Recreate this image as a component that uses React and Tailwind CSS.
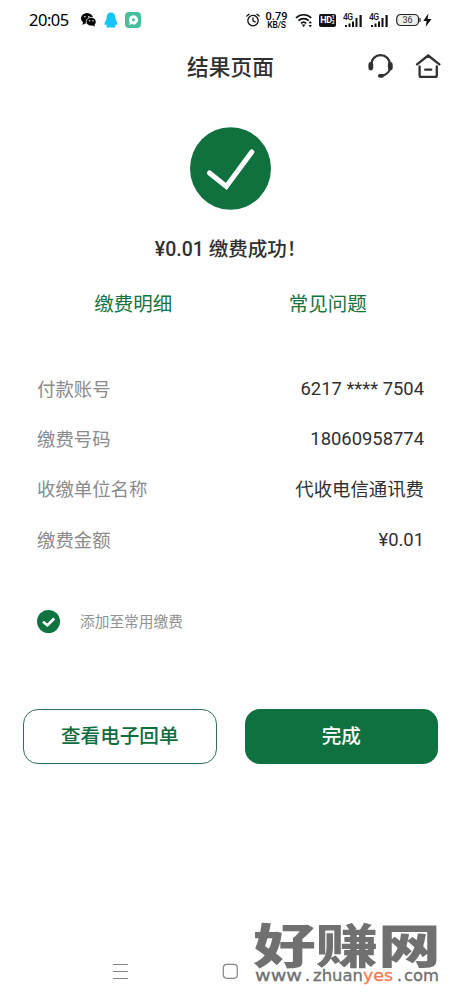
const DETAILS = [
  { label: '付款账号', value: '6217 **** 7504' },
  { label: '缴费号码', value: '18060958774' },
  { label: '收缴单位名称', value: '代收电信通讯费' },
  { label: '缴费金额', value: '¥0.01' },
]

export default function App() {
  return (
    <div className="w-full h-[1000px] flex flex-col overflow-hidden bg-[#fefefe] text-[#303030] font-['Roboto','Noto_Sans_CJK_SC',sans-serif]">
      <StatusBar />
      <Header />

      <main className="flex flex-col">
        <section className="flex flex-col items-center pt-[36px]">
          <SuccessMark />
          <h2 className="mt-[25px] h-[30px] leading-[30px] text-[19.5px] font-medium whitespace-nowrap">¥0.01 缴费成功！</h2>
        </section>

        <nav className="mt-[25px] h-[30px] px-[36px] grid grid-cols-2 items-center text-center text-[19.5px] leading-[30px] text-[#187341]">
          <button>缴费明细</button>
          <button>常见问题</button>
        </nav>

        <dl className="mt-[44px] px-[37px] flex flex-col">
          {DETAILS.map(item => (
            <DetailRow key={item.label} label={item.label} value={item.value} />
          ))}
        </dl>

        <label className="mt-[44px] h-[24px] px-[37px] flex items-center gap-[20px]">
          <svg className="w-[23px] h-[23px]" viewBox="0 0 23 23" fill="none">
            <circle cx="11.5" cy="11.5" r="11.5" fill="#0f723f" />
            <path d="M6 11.7 10.4 15.3 17.2 8.5" stroke="#fff" strokeWidth="2.7" />
          </svg>
          <span className="pt-[2px] text-[14.7px] leading-[24px] text-[#929292]">添加至常用缴费</span>
        </label>

        <div className="mt-[76px] px-[23px] grid grid-cols-2 gap-[28px] h-[55px] text-[19.6px] font-medium">
          <button className="rounded-[15px] border border-[#2f7152] text-[#0f6d3d]">查看电子回单</button>
          <button className="rounded-[15px] bg-[#0f713f] text-white">完成</button>
        </div>
      </main>

      <BottomBar />
    </div>
  )
}

function StatusBar() {
  return (
    <div className="h-[40px] shrink-0 px-[29px] flex items-center justify-between text-black">
      <div className="flex items-center">
        <span className="w-[51px] text-[16.5px] leading-none font-['Noto_Sans',sans-serif] tracking-[-0.5px]">20:05</span>
        <svg className="w-[17px] h-[16px]" viewBox="0 0 17 16">
          <ellipse cx="7" cy="6.2" rx="6" ry="5.2" />
          <path d="M3 10 2.5 13l3.2-2z" />
          <ellipse cx="11.2" cy="9.7" rx="5" ry="4.3" stroke="#fff" strokeWidth="0.8" />
          <path d="m12 13 2.8 1.8-.4-3z" />
          <circle cx="4.9" cy="4.8" r=".8" fill="#fff" />
          <circle cx="8.8" cy="4.8" r=".8" fill="#fff" />
          <circle cx="9.7" cy="8.7" r=".7" fill="#fff" />
          <circle cx="13" cy="8.7" r=".7" fill="#fff" />
        </svg>
        <svg className="ml-[7px] w-[14px] h-[16px]" viewBox="0 0 14 16" fill="#16c5f7">
          <path d="M7 .5c-3 0-4.5 2-4.4 5.5C2.6 8 .5 9.6.5 12c0 1.2.7 1.3 1.6.2.2 1 .7 1.5 1.1 1.8-1.1.3-1.2 1.5.1 1.5h7.4c1.3 0 1.2-1.2.1-1.5.4-.3.9-.8 1.1-1.8.9 1.1 1.6 1 1.6-.2 0-2.4-2.1-4-2.1-6C11.5 2.5 10 .5 7 .5Z" />
        </svg>
        <svg className="ml-[7px] w-[16px] h-[16px]" viewBox="0 0 16 16">
          <rect width="16" height="16" rx="4" fill="#4bbd9f" />
          <path d="M8.5 3.2a4.6 4.6 0 1 1-1.9 8.8L4 13l.7-2.4a4.6 4.6 0 0 1 3.8-7.4Z" fill="#fff" />
          <circle cx="8.4" cy="7.8" r="1.5" fill="#4bbd9f" />
        </svg>
      </div>

      <div className="flex items-center">
        <svg className="w-[14px] h-[14px]" viewBox="0 0 14 14" fill="none" stroke="#111" strokeWidth="1.3" strokeLinecap="round">
          <circle cx="7" cy="7.6" r="5.2" />
          <path d="M7 4.8v3.1l2.2 1M.9 3 3 1.2M11 1.2 13.1 3" />
        </svg>
        <div className="ml-[6px] w-[21px] flex flex-col items-center font-medium whitespace-nowrap">
          <span className="text-[11px] leading-[9px]">0.79</span>
          <span className="text-[8.5px] leading-[8px] tracking-[-0.2px]">KB/S</span>
        </div>
        <svg className="ml-[8px] w-[18px] h-[15px]" viewBox="0 0 18 15" fill="none" stroke="#111" strokeWidth="1.7">
          <path d="M1 4.9c4.3-4.2 11-4.2 15.2 0M3.5 7.7c3-2.9 7.3-2.9 10.2 0M6 10.4c1.6-1.5 3.7-1.5 5.2 0" />
          <path d="M6.7 11.6 8.6 14l1.9-2.4z" fill="#111" stroke="none" />
          <path d="m15.2 8-1.8 2.3h3.6zM15.2 14.3l-1.8-2.4h3.6z" fill="#111" stroke="none" />
        </svg>
        <div className="ml-[6px] w-[17px] h-[13px] rounded-[2px] bg-[#111] text-white flex items-center justify-center font-bold">
          <span className="text-[9px] leading-none tracking-[-0.4px]">HD</span>
          <span className="flex flex-col text-[5px] leading-[5px]"><i className="not-italic">1</i><i className="not-italic">2</i></span>
        </div>
        <Signal className="ml-[7px] w-[20px] h-[15px]" />
        <Signal className="ml-[6px] w-[20px] h-[15px]" />
        <svg className="ml-[7px] w-[36px] h-[14px]" viewBox="0 0 36 14">
          <rect x=".7" y="1.5" width="21.8" height="11" rx="4" fill="#eee" stroke="#222" strokeWidth="1.2" />
          <path d="M24 5v4" stroke="#222" strokeWidth="1.2" />
          <text x="11.6" y="10.3" textAnchor="middle" fontSize="9" fill="#333">36</text>
          <path d="M32.3.6 27.3 8h3.3l-.9 5.7L35.6 6h-3.9z" fill="#111" />
        </svg>
      </div>
    </div>
  )
}

function Signal({ className }) {
  return (
    <svg className={className} viewBox="0 0 20 15" fill="#111">
      <text x="0" y="7.2" fontSize="8.5" fontWeight="500" textLength="10">4G</text>
      <path d="M2 12h2v2H2zM5.5 10.5h2V14h-2zM9 8.5h2V14H9zM12.5 5h2v9h-2zM16.5 2h2.2v12h-2.2z" />
    </svg>
  )
}

function Header() {
  return (
    <header className="h-[51px] shrink-0 px-[20px] grid grid-cols-[1fr_auto_1fr] items-center">
      <span />
      <h1 className="pt-[4px] text-[21.7px] leading-[32px] font-medium">结果页面</h1>
      <div className="flex items-center justify-end gap-[22px] text-[#303030]">
        <svg className="w-[26px] h-[26px]" viewBox="0 0 26 26" fill="none" stroke="currentColor" strokeWidth="2.2">
          <path d="M4.2 14v-2.5a9.4 9.4 0 0 1 18.8 0V14c0 4.6-3.5 8-8.4 8.7" />
          <path d="M3.8 11.4v3.7M23.3 11.4v3.7" strokeWidth="4.8" strokeLinecap="round" />
          <path d="M12.8 22.9h2.3" strokeWidth="3.6" strokeLinecap="round" />
        </svg>
        <svg className="w-[26px] h-[26px]" viewBox="0 0 26 26" fill="none" stroke="currentColor" strokeWidth="2.3" strokeLinecap="round" strokeLinejoin="round">
          <path d="M2 11.3 13.2 2.5l11.2 8.8M4.6 13.4v9c0 .9.5 1.4 1.4 1.4h14.4c.9 0 1.4-.5 1.4-1.4v-9M10.2 16.7h6" />
        </svg>
      </div>
    </header>
  )
}

function SuccessMark() {
  return (
    <svg className="w-[82px] h-[83px]" viewBox="0 0 82 83" fill="none">
      <ellipse cx="40.5" cy="41.5" rx="40.5" ry="41.3" fill="#10713f" />
      <path d="M19.5 46 36.3 59.5 61.8 25" stroke="#fff" strokeWidth="5" strokeLinecap="round" />
    </svg>
  )
}

function DetailRow({ label, value }) {
  return (
    <div className="h-[50.3px] flex items-center justify-between text-[18.4px] leading-[28px]">
      <dt className="pt-px text-[#8b8b8b]">{label}</dt>
      <dd>{value}</dd>
    </div>
  )
}

function BottomBar() {
  return (
    <footer className="mt-auto h-[100px] shrink-0 pl-[112px] pr-[21px] flex items-start">
      <svg className="mt-[63px] w-[17px] h-[17px]" viewBox="0 0 17 17" stroke="#858585" strokeWidth="1.2">
        <path d="M1 1.5h15M1 8.5h15M1 15.5h15" />
      </svg>
      <svg className="ml-[93px] mt-[63px] w-[17px] h-[17px]" viewBox="0 0 17 17" fill="none" stroke="#858585" strokeWidth="1.2">
        <rect x="1.3" y="1.3" width="14" height="14" rx="3.5" />
      </svg>
      <Watermark />
    </footer>
  )
}

function Watermark() {
  return (
    <svg className="ml-auto w-[186px] h-[90px] shrink-0 overflow-visible" viewBox="0 0 186 90" fill="#707070">
      <g transform="translate(0 63) scale(1.33 1)" fontFamily="Noto Sans CJK SC" fontSize="47" fontWeight="900">
        <text x="-0.5" y="0" textLength="141">好赚网</text>
      </g>
      <g fontFamily="DejaVu Sans" fontSize="15.5" stroke="#707070" strokeWidth="0.3">
        <text x="1" y="81" textLength="47" lengthAdjust="spacingAndGlyphs">www</text>
        <text x="51" y="81">.</text>
        <text x="59" y="81" textLength="50" lengthAdjust="spacingAndGlyphs">zhuan</text>
        <text x="109" y="81" fill="#f47b50" stroke="#f47b50" textLength="30" lengthAdjust="spacingAndGlyphs">yes</text>
        <text x="143" y="81">.</text>
        <text x="150" y="81" textLength="35" lengthAdjust="spacingAndGlyphs">com</text>
      </g>
    </svg>
  )
}
